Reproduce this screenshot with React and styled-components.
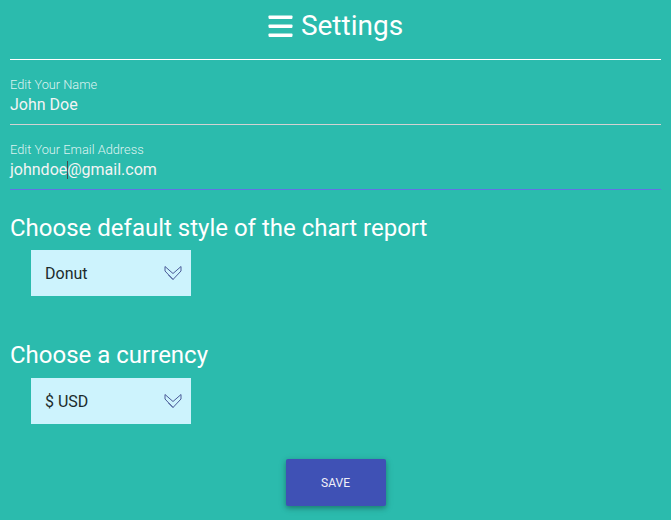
import React from "react";
import styled, { createGlobalStyle } from "styled-components";

const Global = createGlobalStyle`
  html, body { margin: 0; padding: 0; background: #2bbbad; }
  body { font-family: Roboto, "Noto Sans", "Liberation Sans", sans-serif; color: #fff; }
  * { box-sizing: border-box; }
`;

const Page = styled.div`
  width: 671px;
  min-height: 520px;
  background: #2bbbad;
  padding: 0 10px 0 10px;
  display: flex;
  flex-direction: column;
`;

const Header = styled.header`
  display: flex;
  align-items: center;
  justify-content: center;
  gap: 8px;
  padding: 8px 0 15px;
  border-bottom: 1px solid #ffffff;
`;

const Title = styled.h1`
  margin: 0;
  font-size: 28px;
  line-height: 36px;
  font-weight: 400;
  color: #fff;
`;

const Field = styled.div`
  margin-top: 18px;
  padding-bottom: 9px;
  border-bottom: 1px solid ${(p) => (p.$focused ? "#6272e4" : "#d2d2d2")};
  display: flex;
  flex-direction: column;
  gap: 3px;
`;

const Label = styled.label`
  font-size: 12.8px;
  line-height: 14px;
  font-weight: 300;
  color: rgba(255, 255, 255, 0.85);
`;

const Value = styled.div`
  font-size: 16px;
  line-height: 20px;
  color: #f4f4f4;
`;

const Caret = styled.span`
  display: inline-block;
  width: 1px;
  height: 18px;
  margin-right: -1px;
  vertical-align: -4px;
  background: #4a4a4a;
`;

const Section = styled.section`
  margin-top: ${(p) => p.$top}px;
  display: flex;
  flex-direction: column;
  gap: ${(p) => p.$gap}px;
`;

const Heading = styled.h2`
  margin: 0;
  font-size: 24px;
  line-height: 28px;
  font-weight: 400;
  color: #fff;
`;

const Select = styled.div`
  margin-left: 21px;
  width: 160px;
  height: 46px;
  background: #cdf3fd;
  display: flex;
  align-items: center;
  justify-content: space-between;
  padding: 0 9px 0 14px;
  font-size: 16px;
  color: #1c2b2b;
`;

const Footer = styled.div`
  margin-top: 35px;
  display: flex;
  justify-content: center;
`;

const SaveButton = styled.button`
  width: 100px;
  height: 47px;
  border: none;
  border-radius: 2px;
  background: #3f51b5;
  color: #f0f0f8;
  font-family: Roboto, "Liberation Sans", sans-serif;
  font-size: 12px;
  text-transform: uppercase;
  box-shadow: 0 2px 5px rgba(0, 0, 0, 0.28), 0 2px 10px rgba(0, 0, 0, 0.1);
  cursor: pointer;
`;

const BarsIcon = () => (
  <svg width="25" height="24" viewBox="0 0 25 24" aria-hidden="true">
    <rect x="0.5" y="1.5" width="24" height="3.4" rx="0.8" fill="#fff" />
    <rect x="0.5" y="10.5" width="24" height="3.4" rx="0.8" fill="#fff" />
    <rect x="0.5" y="19.5" width="24" height="3.4" rx="0.8" fill="#fff" />
  </svg>
);

const ChevronIcon = () => (
  <svg width="18" height="16" viewBox="0 0 18 16" aria-hidden="true">
    <path
      d="M1 1.5 L9 8.5 L17 1.5 L17 6 L9 14.5 L1 6 Z M9 14.5 L4.5 10"
      fill="none"
      stroke="#4a5b98"
      strokeWidth="1"
      strokeLinejoin="miter"
    />
  </svg>
);

export default function App() {
  return (
    <>
      <Global />
      <Page>
        <Header>
          <BarsIcon />
          <Title>Settings</Title>
        </Header>
        <Field>
          <Label>Edit Your Name</Label>
          <Value>John Doe</Value>
        </Field>
        <Field $focused>
          <Label>Edit Your Email Address</Label>
          <Value>
            johndoe<Caret />@gmail.com
          </Value>
        </Field>
        <Section $top={24} $gap={8}>
          <Heading>Choose default style of the chart report</Heading>
          <Select>
            <span>Donut</span>
            <ChevronIcon />
          </Select>
        </Section>
        <Section $top={45} $gap={9}>
          <Heading>Choose a currency</Heading>
          <Select>
            <span>$ USD</span>
            <ChevronIcon />
          </Select>
        </Section>
        <Footer>
          <SaveButton>Save</SaveButton>
        </Footer>
      </Page>
    </>
  );
}
